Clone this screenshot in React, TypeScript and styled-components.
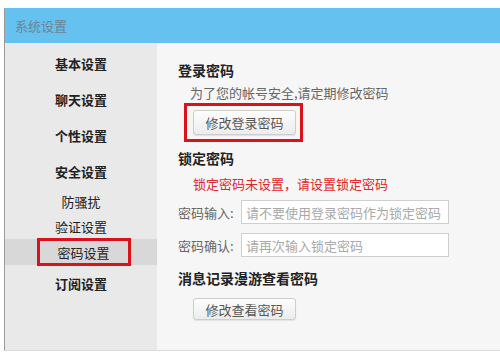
import React from 'react';
import styled, { createGlobalStyle } from 'styled-components';

const GlobalStyle = createGlobalStyle`
  body {
    margin: 0;
    background: #ffffff;
    font-family: "Noto Sans CJK SC", "Noto Sans", sans-serif;
  }
`;

const Page = styled.div`
  width: 500px;
  height: 352px;
  padding: 8px 0 0 4px;
  box-sizing: border-box;
  overflow: hidden;
`;

const Window = styled.div`
  height: 342px;
  border-left: 1px solid #9a9a9a;
  border-bottom: 1px solid #dcdcdc;
  display: flex;
  flex-direction: column;
`;

const TitleBar = styled.div`
  height: 35px;
  background: #65c1ef;
  display: flex;
  align-items: center;
  padding-left: 10px;
  font-size: 13px;
  color: #6a8597;
`;

const Body = styled.div`
  flex: 1;
  display: flex;
`;

const Sidebar = styled.div`
  width: 152px;
  background: #e9e9e9;
  padding-top: 2px;
  display: flex;
  flex-direction: column;
`;

const NavItem = styled.div<{ $sub?: boolean; $active?: boolean }>`
  height: ${p => (p.$active ? 26 : p.$sub ? 25 : 36)}px;
  display: flex;
  align-items: center;
  justify-content: center;
  font-size: 13px;
  font-weight: ${p => (p.$sub ? 400 : 700)};
  color: #222;
  background: ${p => (p.$active ? '#d8d8d8' : 'transparent')};
`;

const Marked = styled.span`
  display: inline-flex;
  align-items: center;
  justify-content: center;
  height: 28px;
  width: 94px;
  box-sizing: border-box;
  border: 3px solid #d9121b;
  margin-left: 5px;
`;

const Content = styled.div`
  flex: 1;
  background: #f6f6f6;
  padding: 17px 0 0 21px;
  display: flex;
  flex-direction: column;
  align-items: flex-start;
`;

const Heading = styled.div<{ $gap?: number }>`
  font-size: 14px;
  font-weight: 700;
  color: #222;
  line-height: 20px;
  margin-top: ${p => p.$gap ?? 0}px;
`;

const Note = styled.div<{ $red?: boolean; $indent: number }>`
  font-size: 13px;
  line-height: 20px;
  margin-left: ${p => p.$indent}px;
  margin-top: ${p => (p.$red ? 6 : 3)}px;
  color: ${p => (p.$red ? '#e0262a' : '#666')};
`;

const Highlight = styled.div`
  border: 3px solid #d9121b;
  padding: 4px 4px 4px 6px;
  margin-left: 6px;
  width: 119px;
  height: 39px;
  box-sizing: border-box;
  display: flex;
  align-items: flex-start;
`;

const Button = styled.button<{ $indent?: number }>`
  flex: none;
  width: 103px;
  height: ${p => (p.$indent ? 22 : 25)}px;
  margin-left: ${p => p.$indent ?? 0}px;
  margin-top: ${p => (p.$indent ? 10 : 0)}px;
  border: 1px solid #cdcdcd;
  border-radius: 3px;
  background: linear-gradient(#fdfdfd, #ececec);
  box-shadow: 0 1px 1px rgba(0, 0, 0, 0.08);
  font-family: inherit;
  font-size: 13px;
  color: #555;
  padding: 0;
`;

const FieldRow = styled.div<{ $gap: number }>`
  display: flex;
  align-items: center;
  margin-top: ${p => p.$gap}px;
`;

const Label = styled.span`
  width: 63px;
  font-size: 13px;
  color: #666;
`;

const Input = styled.input`
  width: 208px;
  height: 24px;
  box-sizing: border-box;
  border: 1px solid #cfcfcf;
  background: #fff;
  padding: 0 4px;
  font-family: inherit;
  font-size: 13px;
  color: #333;
  outline: none;

  &::placeholder {
    color: #a8a8a8;
  }
`;

const navItems = [
  { label: '基本设置' },
  { label: '聊天设置' },
  { label: '个性设置' },
  { label: '安全设置' },
  { label: '防骚扰', sub: true },
  { label: '验证设置', sub: true },
  { label: '密码设置', sub: true, active: true },
  { label: '订阅设置' },
];

const App = () => {
  return (
    <Page>
      <GlobalStyle />
      <Window>
        <TitleBar>系统设置</TitleBar>
        <Body>
          <Sidebar>
            {navItems.map(item => (
              <NavItem key={item.label} $sub={item.sub} $active={item.active}>
                {item.active ? <Marked>{item.label}</Marked> : item.label}
              </NavItem>
            ))}
          </Sidebar>
          <Content>
            <Heading>登录密码</Heading>
            <Note $indent={12}>为了您的帐号安全,请定期修改密码</Note>
            <Highlight>
              <Button>修改登录密码</Button>
            </Highlight>
            <Heading $gap={6}>锁定密码</Heading>
            <Note $red $indent={15}>锁定密码未设置，请设置锁定密码</Note>
            <FieldRow $gap={6}>
              <Label>密码输入:</Label>
              <Input placeholder="请不要使用登录密码作为锁定密码" />
            </FieldRow>
            <FieldRow $gap={9}>
              <Label>密码确认:</Label>
              <Input placeholder="请再次输入锁定密码" />
            </FieldRow>
            <Heading $gap={11}>消息记录漫游查看密码</Heading>
            <Button $indent={15}>修改查看密码</Button>
          </Content>
        </Body>
      </Window>
    </Page>
  );
};

export default App;
